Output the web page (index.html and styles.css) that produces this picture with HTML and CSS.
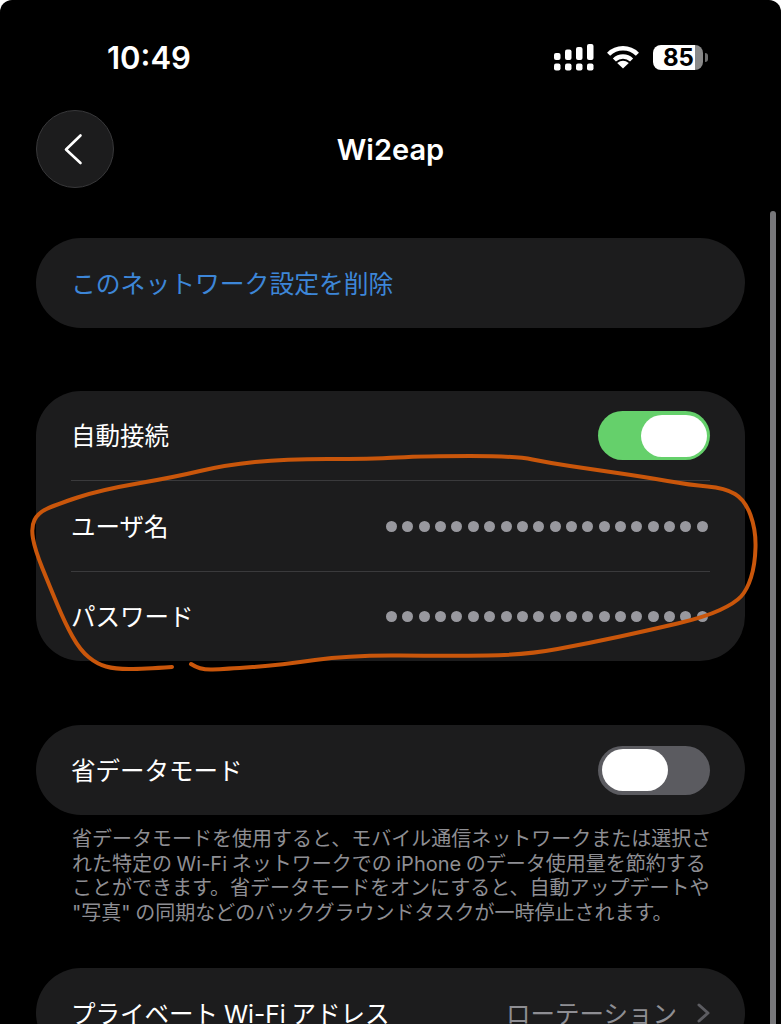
FILE: index.html
```html
<!DOCTYPE html>
<html lang="ja">
<head>
    <meta charset="UTF-8">
    <meta name="viewport" content="width=device-width, initial-scale=1.0">
    <title>Wi2eap</title>
    <link rel="stylesheet" href="styles.css">
</head>
<body>

    <div class="screen">
        <div class="status">
            <span class="time">10:49</span>
            <div class="status-icons">
                <svg class="signal" width="40" height="27" viewBox="0 0 40 27" fill="#fff">
                    <rect x="0" y="9" width="6.5" height="7" rx="2"/>
                    <rect x="11" y="5.5" width="6.5" height="10.5" rx="2"/>
                    <rect x="22" y="3" width="6.5" height="13" rx="2"/>
                    <rect x="33" y="0" width="6.5" height="16" rx="2"/>
                    <rect x="0" y="19.5" width="6.5" height="7" rx="2"/>
                    <rect x="11" y="19.5" width="6.5" height="7" rx="2"/>
                    <rect x="22" y="19.5" width="6.5" height="7" rx="2"/>
                    <rect x="33" y="19.5" width="6.5" height="7" rx="2"/>
                </svg>
                <svg class="wifi" width="34" height="24" viewBox="0 0 34 24" fill="none" stroke="#fff" stroke-width="4.4">
                    <path d="M2.6 9.2A20.4 20.4 0 0 1 31.4 9.2"/>
                    <path d="M8.4 15A12.2 12.2 0 0 1 25.6 15"/>
                    <path d="M17 23.5L11.2 18Q17 13.6 22.8 18Z" fill="#fff" stroke="none"/>
                </svg>
                <div class="battery"><span>85</span></div>
                <div class="battery-cap"></div>
            </div>
        </div>

        <div class="nav">
            <button class="back">
                <svg width="20" height="32" viewBox="0 0 20 32" fill="none" stroke="#fff" stroke-width="2.6" stroke-linecap="round" stroke-linejoin="round">
                    <path d="M17.5 2.5L3 16.5L17.5 30"/>
                </svg>
            </button>
            <h1>Wi2eap</h1>
        </div>

        <div class="card first">
            <div class="row"><span class="link">このネットワーク設定を削除</span></div>
        </div>

        <div class="card">
            <div class="row line">
                <span>自動接続</span>
                <div class="toggle on"><div class="knob"></div></div>
            </div>
            <div class="row line">
                <span>ユーザ名</span>
                <div class="dots">
                    <i></i><i></i><i></i><i></i><i></i><i></i><i></i><i></i><i></i><i></i>
                    <i></i><i></i><i></i><i></i><i></i><i></i><i></i><i></i><i></i><i></i>
                </div>
            </div>
            <div class="row">
                <span>パスワード</span>
                <div class="dots">
                    <i></i><i></i><i></i><i></i><i></i><i></i><i></i><i></i><i></i><i></i>
                    <i></i><i></i><i></i><i></i><i></i><i></i><i></i><i></i><i></i><i></i>
                </div>
            </div>
        </div>

        <div class="card">
            <div class="row">
                <span>省データモード</span>
                <div class="toggle"><div class="knob"></div></div>
            </div>
        </div>
        <p class="note">
            省データモードを使用すると、モバイル通信ネットワークまたは選択さ<br>
            れた特定の Wi-Fi ネットワークでの iPhone のデータ使用量を節約する<br>
            ことができます。省データモードをオンにすると、自動アップデートや<br>
            "写真" の同期などのバックグラウンドタスクが一時停止されます。
        </p>

        <div class="card last">
            <div class="row">
                <span class="tight">プライベート Wi-Fi アドレス</span>
                <div class="value">
                    <span>ローテーション</span>
                    <svg width="13" height="20" viewBox="0 0 13 20" fill="none" stroke="#5c5c61" stroke-width="3" stroke-linecap="round" stroke-linejoin="round">
                        <path d="M2 2L11 10L2 18"/>
                    </svg>
                </div>
            </div>
        </div>

        <div class="scrollbar"></div>

        <!--手書きの丸印 -->
        <svg class="scribble" width="781" height="1024" viewBox="0 0 781 1024" fill="none" stroke="#c9560b" stroke-width="4" stroke-linecap="round">
            <path d="M172 667Q143 669 129 669Q115 669 106 666.5Q97 664 88.5 657Q80 650 72.5 636.5Q65 623 57.5 605Q50 587 42.5 568.5Q35 550 33 538.5Q31 527 34.5 520Q38 513 46.5 509Q55 505 77.5 497.5Q100 490 137.5 483.5Q175 477 200 471Q225 465 255 462Q285 459 327.5 459Q370 459 397.5 457.5Q425 456 470 456Q515 456 532.5 459.5Q550 463 570 466Q590 469 617.5 473Q645 477 667.5 481Q690 485 707.5 486.5Q725 488 735 494Q745 500 750.5 515Q756 530 755.5 547.5Q755 565 751 577.5Q747 590 741 596.5Q735 603 720 610Q705 617 677.5 623.5Q650 630 620 636.5Q590 643 557.5 649Q525 655 487.5 655.5Q450 656 400 655.5Q350 655 315 660Q280 665 252.5 667Q225 669 212.5 669.5Q200 670 191 664"/>
        </svg>
    </div>

</body>
</html>
```

FILE: styles.css
```css
html {
    background-color: #fff;
}
body {
    margin: 0;
    font-family: Inter, "Noto Sans CJK JP", sans-serif;
    color: #fff;
}
.screen {
    position: relative;
    box-sizing: border-box;
    width: 781px;
    height: 1024px;
    padding: 0 36px;
    overflow: hidden;
    background-color: #000;
    border-radius: 12px 12px 0 0;
}
.status {
    display: flex;
    justify-content: space-between;
    align-items: center;
    box-sizing: border-box;
    height: 110px;
    padding: 4px 37px 0 71px;
}
.time {
    font-size: 31px;
    font-weight: 600;
}
.status-icons {
    display: flex;
    align-items: center;
}
.signal {
    margin-right: 12px;
}
.wifi {
    margin-right: 13px;
}
.battery {
    box-sizing: border-box;
    width: 50px;
    height: 25px;
    padding-left: 10px;
    border-radius: 8px;
    background: linear-gradient(90deg, #fff 84%, #8a8a8a 84%);
    color: #000;
    font-size: 24px;
    font-weight: 700;
    line-height: 25px;
}
.battery-cap {
    width: 3px;
    height: 9px;
    margin-left: 2px;
    border-radius: 0 3px 3px 0;
    background-color: #6e6e6e;
}
.nav {
    display: grid;
    grid-template-columns: 78px 1fr 78px;
    align-items: center;
    height: 78px;
    margin-bottom: 50px;
}
.nav h1 {
    grid-column: 2;
    margin: 0;
    text-align: center;
    font-size: 29px;
    font-weight: 600;
}
.back {
    grid-column: 1;
    grid-row: 1;
    display: flex;
    justify-content: center;
    align-items: center;
    box-sizing: border-box;
    width: 78px;
    height: 78px;
    padding: 0 5px 0 0;
    background-color: #1c1c1d;
    border: 1.5px solid #38383a;
    border-radius: 50%;
}
.card {
    margin-bottom: 64px;
    padding: 0 35px;
    background-color: #1c1c1d;
    border-radius: 45px;
    font-size: 24.5px;
}
.first {
    margin-bottom: 63px;
}
.card + .note {
    margin-top: -52px;
}
.row {
    display: flex;
    justify-content: space-between;
    align-items: center;
    box-sizing: border-box;
    height: 90px;
}
.row > span {
    margin-bottom: 2px;
}
.line {
    border-bottom: 1px solid #3a3a3c;
}
.line + .line {
    height: 91px;
}
.line + .row:not(.line) {
    height: 89px;
}
.link {
    color: #3d86d8;
    font-size: 24.8px;
}
.row > .tight {
    margin-bottom: 0;
    word-spacing: -1px;
}
.toggle {
    display: flex;
    align-items: center;
    box-sizing: border-box;
    width: 112px;
    height: 49px;
    padding: 0 3px 0 4px;
    border-radius: 25px;
    background-color: #5b5b60;
}
.toggle.on {
    justify-content: flex-end;
    background-color: #65d06b;
}
.knob {
    width: 66px;
    height: 42px;
    border-radius: 21px;
    background-color: #fff;
}
.dots {
    display: flex;
    justify-content: space-between;
    width: 322px;
    margin-right: 2px;
}
.dots i {
    width: 11px;
    height: 11px;
    border-radius: 50%;
    background-color: #98989e;
}
.note {
    margin: 0 0 42px;
    padding: 0 36px;
    color: #8e8e93;
    font-size: 20px;
    line-height: 24.7px;
    white-space: nowrap;
    word-spacing: -1px;
}
.value {
    display: flex;
    align-items: center;
    gap: 20px;
    color: #8e8e93;
}
.scrollbar {
    position: absolute;
    top: 211px;
    right: 5px;
    bottom: 0;
    width: 6px;
    border-radius: 3px 3px 0 0;
    background-color: #77777a;
}
.scribble {
    position: absolute;
    top: 0;
    left: 0;
}
```
